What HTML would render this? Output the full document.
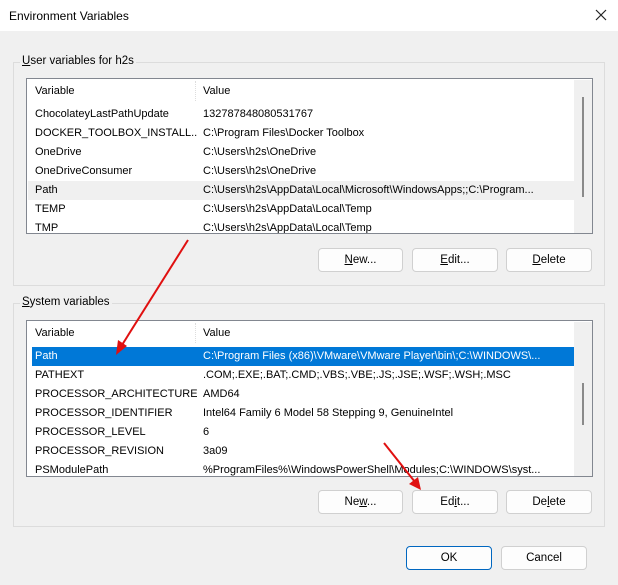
<!DOCTYPE html><html><head><style>
*{margin:0;padding:0;box-sizing:border-box}
body{width:618px;height:585px;background:#f0f0f0;font-family:"Liberation Sans",sans-serif;font-size:11.5px;color:#000;position:relative;overflow:hidden}
.a{position:absolute}
.title{left:0;top:0;width:618px;height:31px;background:#fff}
.grp{border:1px solid #dcdcdc}
.list{background:#fff;border:1px solid #828790;overflow:hidden;font-size:11px}
.row{position:absolute;left:1px;height:19px;line-height:19px;white-space:nowrap}
.row span{position:absolute;top:0}
.row span.v{width:162px;overflow:hidden}
.btn{background:#fdfdfd;border:1px solid #d0d0d0;border-radius:4px;text-align:center;line-height:22px}
.lbl{background:#f0f0f0;padding:0 2px}
</style></head><body>
<div class="a title"></div>
<div class="a" style="left:9px;top:9px;font-size:12px">Environment Variables</div>
<svg class="a" style="left:595px;top:9px" width="12" height="12"><path d="M1 1L11 11M11 1L1 11" stroke="#222" stroke-width="1.2"/></svg>

<div class="a grp" style="left:13px;top:62px;width:592px;height:224px"></div>
<div class="a lbl" style="left:20px;top:55px"><u>U</u>ser variables for h2s</div>
<div class="a list" style="left:26px;top:78px;width:567px;height:156px">
 <div class="a" style="left:168px;top:2px;height:20px;border-left:1px dotted #ddd"></div>
 <div class="row" style="top:3px"><span style="left:7px">Variable</span><span style="left:175px">Value</span></div>
 <div class="a" style="left:1px;top:102px;width:546px;height:19px;background:#f0f0f0"></div>
 <div class="row" style="top:26px"><span class="v" style="left:7px">ChocolateyLastPathUpdate</span><span style="left:175px">132787848080531767</span></div>
 <div class="row" style="top:45px"><span class="v" style="left:7px">DOCKER_TOOLBOX_INSTALL...</span><span style="left:175px">C:\Program Files\Docker Toolbox</span></div>
 <div class="row" style="top:64px"><span class="v" style="left:7px">OneDrive</span><span style="left:175px">C:\Users\h2s\OneDrive</span></div>
 <div class="row" style="top:83px"><span class="v" style="left:7px">OneDriveConsumer</span><span style="left:175px">C:\Users\h2s\OneDrive</span></div>
 <div class="row" style="top:102px"><span class="v" style="left:7px">Path</span><span style="left:175px">C:\Users\h2s\AppData\Local\Microsoft\WindowsApps;;C:\Program...</span></div>
 <div class="row" style="top:121px"><span class="v" style="left:7px">TEMP</span><span style="left:175px">C:\Users\h2s\AppData\Local\Temp</span></div>
 <div class="row" style="top:140px"><span class="v" style="left:7px">TMP</span><span style="left:175px">C:\Users\h2s\AppData\Local\Temp</span></div>
 <div class="a" style="left:547px;top:1px;width:18px;height:154px;background:#f0f0f0"></div>
 <div class="a" style="left:555px;top:18px;width:2px;height:100px;background:#8a8a8a"></div>
</div>
<div class="a btn" style="left:318px;top:248px;width:85px;height:24px"><u>N</u>ew...</div>
<div class="a btn" style="left:412px;top:248px;width:86px;height:24px"><u>E</u>dit...</div>
<div class="a btn" style="left:506px;top:248px;width:86px;height:24px"><u>D</u>elete</div>

<div class="a grp" style="left:13px;top:303px;width:592px;height:224px"></div>
<div class="a lbl" style="left:20px;top:296px"><u>S</u>ystem variables</div>
<div class="a list" style="left:26px;top:320px;width:567px;height:157px">
 <div class="a" style="left:168px;top:2px;height:20px;border-left:1px dotted #ddd"></div>
 <div class="row" style="top:3px"><span style="left:7px">Variable</span><span style="left:175px">Value</span></div>
 <div class="a" style="left:5px;top:26px;width:542px;height:19px;background:#0078d7"></div>
 <div class="row" style="top:26px;color:#fff"><span class="v" style="left:7px">Path</span><span style="left:175px">C:\Program Files (x86)\VMware\VMware Player\bin\;C:\WINDOWS\...</span></div>
 <div class="row" style="top:45px"><span class="v" style="left:7px">PATHEXT</span><span style="left:175px">.COM;.EXE;.BAT;.CMD;.VBS;.VBE;.JS;.JSE;.WSF;.WSH;.MSC</span></div>
 <div class="row" style="top:64px"><span class="v" style="left:7px">PROCESSOR_ARCHITECTURE</span><span style="left:175px">AMD64</span></div>
 <div class="row" style="top:83px"><span class="v" style="left:7px">PROCESSOR_IDENTIFIER</span><span style="left:175px">Intel64 Family 6 Model 58 Stepping 9, GenuineIntel</span></div>
 <div class="row" style="top:102px"><span class="v" style="left:7px">PROCESSOR_LEVEL</span><span style="left:175px">6</span></div>
 <div class="row" style="top:121px"><span class="v" style="left:7px">PROCESSOR_REVISION</span><span style="left:175px">3a09</span></div>
 <div class="row" style="top:140px"><span class="v" style="left:7px">PSModulePath</span><span style="left:175px">%ProgramFiles%\WindowsPowerShell\Modules;C:\WINDOWS\syst...</span></div>
 <div class="a" style="left:547px;top:1px;width:18px;height:155px;background:#f0f0f0"></div>
 <div class="a" style="left:555px;top:62px;width:2px;height:42px;background:#8a8a8a"></div>
</div>
<div class="a btn" style="left:318px;top:490px;width:85px;height:24px">Ne<u>w</u>...</div>
<div class="a btn" style="left:412px;top:490px;width:86px;height:24px">Ed<u>i</u>t...</div>
<div class="a btn" style="left:506px;top:490px;width:86px;height:24px">De<u>l</u>ete</div>

<div class="a btn" style="left:406px;top:546px;width:86px;height:24px;border:1px solid #0067c0">OK</div>
<div class="a btn" style="left:501px;top:546px;width:86px;height:24px">Cancel</div>

<svg class="a" style="left:0;top:0" width="618" height="585">
<g stroke="#e01010" stroke-width="2" fill="#e01010">
<line x1="188" y1="240" x2="122" y2="345"/>
<polygon points="116,355 118,340 127,346" stroke="none"/>
<line x1="384" y1="443" x2="415" y2="482"/>
<polygon points="421,490 409,484 418,477" stroke="none"/>
</g></svg>
</body></html>
